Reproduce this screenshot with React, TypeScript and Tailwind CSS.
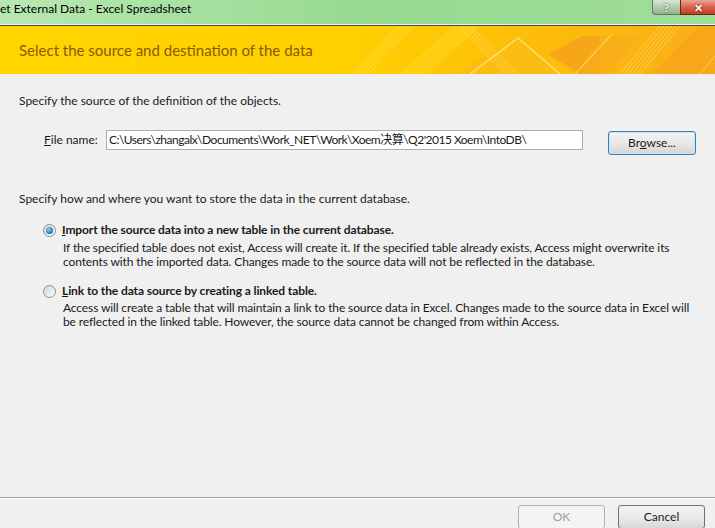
import React from 'react';

const ui = "font-['Lato','Noto_Sans_CJK_SC',sans-serif]";

const Radio = ({ checked }: { checked?: boolean }) => (
  <span className="relative inline-flex h-[13px] w-[13px] shrink-0 items-center justify-center rounded-full border border-[#8e8f8f] bg-gradient-to-br from-[#d6d6d6] to-[#fafafa]">
    {checked && (
      <span className="h-[7px] w-[7px] rounded-full bg-[radial-gradient(circle_at_40%_35%,#8fd3ff,#1b6fb5_70%,#0f4f8f)]" />
    )}
  </span>
);

const BannerArt = () => (
  <svg className="absolute inset-0" width="715" height="48" viewBox="0 0 715 48">
    <defs>
      <linearGradient id="bg" x1="0" x2="1" y1="0" y2="0">
        <stop offset="0" stopColor="#ffd600" />
        <stop offset="0.5" stopColor="#ffcf00" />
        <stop offset="0.75" stopColor="#fdbd0a" />
        <stop offset="1" stopColor="#f9ae18" />
      </linearGradient>
    </defs>
    <rect width="715" height="48" fill="url(#bg)" />
    {[0, 4, 8, 12, 16].map((d) => (
      <line key={d} x1={352 + d} y1="48" x2={398 + d} y2="0" stroke="#ffe15a" strokeWidth="1" opacity="0.8" />
    ))}
    <polygon points="400,48 452,0 480,0 428,48" fill="#ffd21a" opacity="0.7" />
    <polygon points="455,48 518,10 575,48" fill="#fbbd12" />
    {[0, 4, 8, 12].map((d) => (
      <line key={'m' + d} x1={458 + d} y1="0" x2={505 + d} y2="48" stroke="#ffdc55" strokeWidth="1" opacity="0.8" />
    ))}
    <polyline points="470,48 518,12 560,48" fill="none" stroke="#ffe06a" strokeWidth="1.5" />
    <polygon points="548,28 582,10 600,10 600,48 580,48" fill="#f6a21a" opacity="0.85" />
    <polygon points="600,10 640,10 610,48 580,48" fill="#f8ac1e" opacity="0.7" />
    <line x1="575" y1="48" x2="612" y2="8" stroke="#ffd24a" strokeWidth="1.2" />
    {[0, 4, 8, 12, 16, 20].map((d) => (
      <line key={'r' + d} x1={620 + d} y1="48" x2={660 + d} y2="0" stroke="#ffd85a" strokeWidth="1" opacity="0.75" />
    ))}
    <polygon points="650,48 700,0 715,0 715,48" fill="#f7a51c" opacity="0.8" />
    <line x1="700" y1="48" x2="715" y2="30" stroke="#ffd24a" strokeWidth="1" />
  </svg>
);

const App = () => {
  return (
    <div className={`${ui} flex h-[528px] w-[715px] flex-col overflow-hidden whitespace-nowrap bg-[#f0f0f0] text-[12px] text-[#1a1a1a]`}>
      {/* title bar */}
      <div className="relative flex h-[24px] shrink-0 items-start bg-gradient-to-r from-[#b8e8b2] via-[#97da91] to-[#9edd98]">
        <span className="pt-[1px] text-[12px] leading-[16px] text-black">et External Data - Excel Spreadsheet</span>
        <div className="absolute right-0 top-0 flex h-[15px]">
          <div className="flex w-[28px] items-center justify-center rounded-bl-[4px] border border-t-0 border-r-0 border-[#5f7a5f] bg-gradient-to-b from-[#d8e6d5] via-[#b5cdb1] to-[#8fb08a] text-[11px] font-bold leading-none text-white [text-shadow:0_0_2px_#222]">
            ?
          </div>
          <div className="flex w-[35px] items-center justify-center border-b border-l border-[#6a2418] bg-gradient-to-b from-[#e9a593] via-[#d8634c] to-[#c23a22] text-[11px] font-bold leading-none text-white [text-shadow:0_0_2px_#400]">
            ✕
          </div>
        </div>
      </div>
      <div className="h-[1px] shrink-0 bg-[#e8f5e6]" />
      <div className="h-[1px] shrink-0 bg-[#4a4a4a]" />

      {/* banner */}
      <div className="relative flex h-[48px] shrink-0 items-center">
        <BannerArt />
        <span className="relative pl-[19px] text-[15px] leading-[20px] text-[#8a5a00]">
          Select the source and destination of the data
        </span>
      </div>

      {/* body */}
      <div className="flex flex-1 flex-col px-[19px]">
        <p className="mt-[19px] h-[16px] leading-[16px]">Specify the source of the definition of the objects.</p>

        <div className="mt-[21px] flex h-[25px] items-start">
          <span className="ml-[25px] w-[62px] pt-[1px] leading-[18px]">
            <span className="underline">F</span>ile name:
          </span>
          <div className="flex h-[20px] w-[477px] items-center border border-[#abadb3] bg-white pl-[2px] leading-none tracking-[-0.5px]">
            C:\Users\zhangalx\Documents\Work_NET\Work\Xoem决算\Q2'2015 Xoem\IntoDB\
          </div>
          <button className="ml-[25px] mt-[1px] h-[24px] w-[88px] rounded-[3px] border border-[#3c7fb1] bg-gradient-to-b from-[#f4f4f4] via-[#e8e8e8] to-[#d6d6d6] leading-none shadow-[inset_0_0_0_1px_#c5e8f8]">
            Br<span className="underline">o</span>wse...
          </button>
        </div>

        <p className="mt-[36px] h-[16px] leading-[16px]">
          Specify how and where you want to store the data in the current database.
        </p>

        <div className="ml-[24px] mt-[15px] flex h-[16px] items-center gap-[6px]">
          <Radio checked />
          <span className="font-bold leading-[16px] tracking-[-0.1px]">
            <span className="underline">I</span>mport the source data into a new table in the current database.
          </span>
        </div>
        <p className="ml-[44px] mt-[3px] leading-[14px] tracking-[-0.12px]">
          If the specified table does not exist, Access will create it. If the specified table already exists, Access might overwrite its
          <br />
          contents with the imported data. Changes made to the source data will not be reflected in the database.
        </p>

        <div className="ml-[24px] mt-[14px] flex h-[16px] items-center gap-[6px]">
          <Radio />
          <span className="font-bold leading-[16px] tracking-[-0.1px]">
            <span className="underline">L</span>ink to the data source by creating a linked table.
          </span>
        </div>
        <p className="ml-[44px] mt-[2px] leading-[14px] tracking-[-0.12px]">
          Access will create a table that will maintain a link to the source data in Excel. Changes made to the source data in Excel will
          <br />
          be reflected in the linked table. However, the source data cannot be changed from within Access.
        </p>
      </div>

      {/* footer */}
      <div className="h-[31px] shrink-0 border-t border-[#a0a0a0]">
        <div className="h-[1px] bg-white/70" />
        <div className="flex justify-end gap-[13px] pr-[10px] pt-[6px]">
          <button className="h-[24px] w-[87px] rounded-[3px] border border-[#adb2b5] bg-[#f4f4f4] leading-none text-[#a0a0a0]">
            OK
          </button>
          <button className="h-[24px] w-[87px] rounded-[3px] border border-[#707070] bg-gradient-to-b from-[#f2f2f2] via-[#ebebeb] to-[#d8d8d8] leading-none">
            Cancel
          </button>
        </div>
      </div>
    </div>
  );
};

export default App;
